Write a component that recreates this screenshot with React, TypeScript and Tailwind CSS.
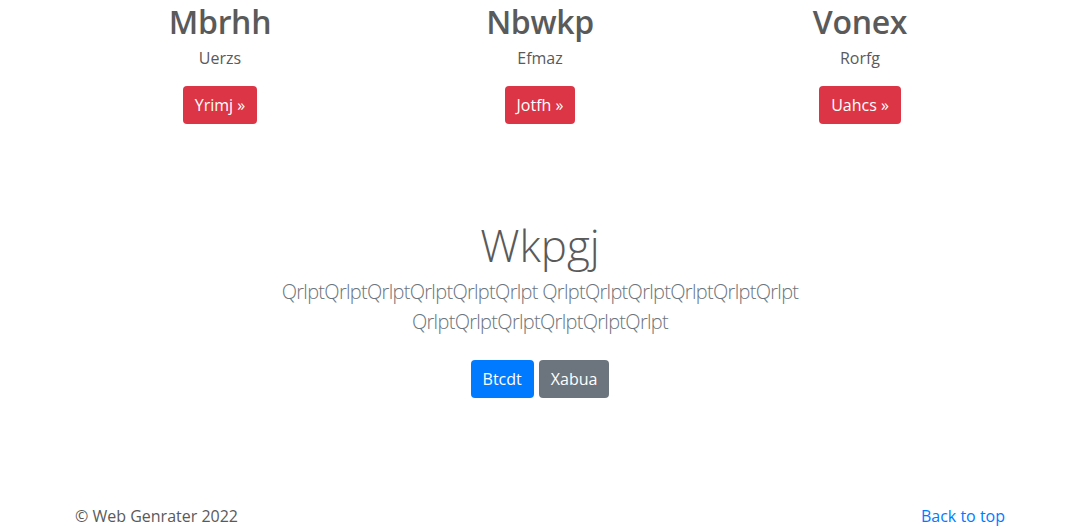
const features = [
  { title: 'Mbrhh', text: 'Uerzs', cta: 'Yrimj' },
  { title: 'Nbwkp', text: 'Efmaz', cta: 'Jotfh' },
  { title: 'Vonex', text: 'Rorfg', cta: 'Uahcs' },
];

const font = { fontFamily: '"Segoe UI", "Open Sans", "Noto Sans", sans-serif' };

export default function App() {
  return (
    <div className="min-h-[526px] bg-white text-[#5a5a5a]" style={font}>
      <div className="mx-auto grid w-[960px] grid-cols-3 text-center">
        {features.map((f) => (
          <div key={f.title} className="px-[15px]">
            <h2 className="mb-[5px] pt-[3px] text-[32px] font-semibold leading-[38px] tracking-[-0.01em]">
              {f.title}
            </h2>
            <p className="mb-4 text-base leading-6">{f.text}</p>
            <a
              href="#"
              className="inline-block rounded bg-[#dc3545] px-3 py-[7px] text-base leading-6 text-white"
            >
              {f.cta} »
            </a>
          </div>
        ))}
      </div>

      <section className="pt-[97px] text-center">
        <h1 className="mb-2 text-[44px] font-light leading-[48px]">Wkpgj</h1>
        <p className="mx-auto mb-[15px] max-w-[610px] text-xl font-light leading-[30px] tracking-[-0.035em] text-[#6c757d]">
          QrlptQrlptQrlptQrlptQrlptQrlpt QrlptQrlptQrlptQrlptQrlptQrlpt QrlptQrlptQrlptQrlptQrlptQrlpt
        </p>
        <div className="flex justify-center gap-[5px] pt-2">
          <a href="#" className="rounded bg-[#007bff] px-3 py-[7px] text-base leading-6 text-white">
            Btcdt
          </a>
          <a href="#" className="rounded bg-[#6c757d] px-3 py-[7px] text-base leading-6 text-white">
            Xabua
          </a>
        </div>
      </section>

      <footer className="mx-auto mt-[106px] flex w-[960px] justify-between px-[15px] text-base leading-6 text-[#5a5a5a]">
        <p>© Web Genrater 2022</p>
        <a href="#" className="text-[#007bff]">
          Back to top
        </a>
      </footer>
    </div>
  );
}
